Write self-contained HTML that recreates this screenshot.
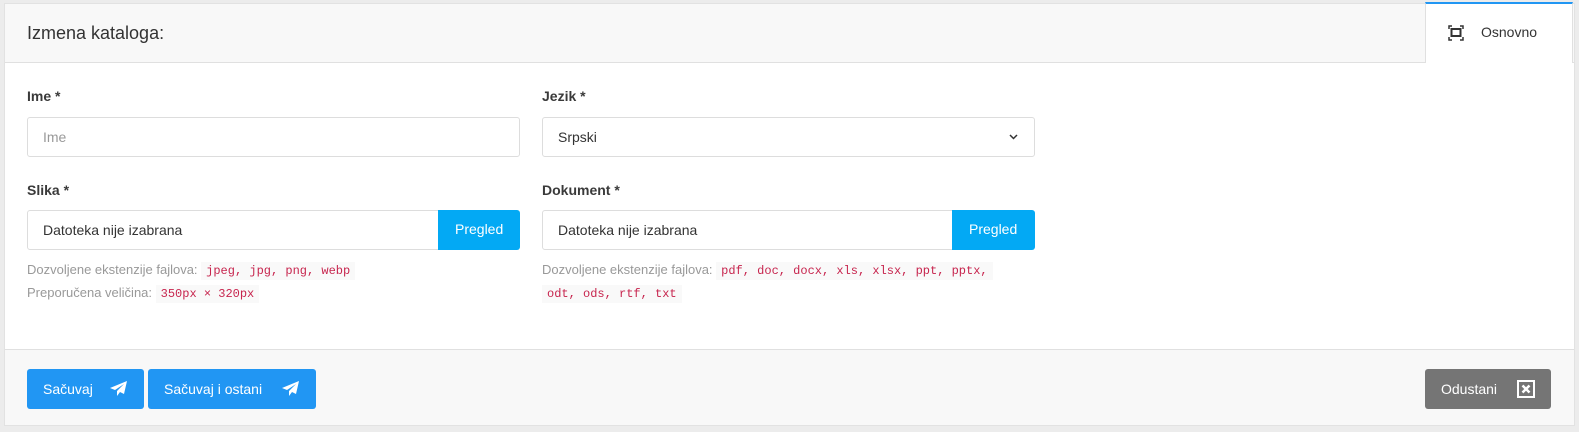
<!DOCTYPE html><html><head><style>
body{margin:0;background:#ececec;font-family:"Liberation Sans",sans-serif;width:1579px;height:432px;overflow:hidden;position:relative}
.card{position:absolute;left:4px;top:3px;width:1571px;height:423px;background:#fff;border:1px solid #e2e2e2;box-sizing:border-box}
.hdr{position:absolute;left:0;top:0;right:0;height:58px;background:#f8f8f8;border-bottom:1px solid #e0e0e0}
.hdr .t{position:absolute;left:22px;top:19px;font-size:18px;color:#333}
.tab{position:absolute;left:1420px;top:-2px;width:148px;height:61px;background:#fff;border-top:2px solid #2196f3;border-left:1px solid #e0e0e0;border-right:1px solid #e0e0e0;box-sizing:border-box}
.tab span{position:absolute;left:55px;top:20px;font-size:14px;color:#333}
.lbl{position:absolute;font-size:14px;font-weight:bold;color:#3a3a3a}
.inp{position:absolute;height:40px;border:1px solid #ddd;border-radius:3px;box-sizing:border-box;font-size:14px;color:#333;padding:11px 15px}
.btnb{position:absolute;background:#03a9f4;color:#fff;font-size:14px;height:40px;border-radius:0 3px 3px 0;padding:11px 17px;box-sizing:border-box}
.help{position:absolute;font-size:13px;color:#999;line-height:22px}
code{font-family:"Liberation Mono",monospace;font-size:12px;color:#c7254e;background:#f9f9f9;padding:2px 5px}
.ftr{position:absolute;left:0;right:0;top:345px;bottom:0;background:#f8f8f8;border-top:1px solid #e0e0e0}
.b{position:absolute;top:19px;height:40px;border-radius:3px;color:#fff;font-size:14px;box-sizing:border-box;padding:12px 16px}
</style></head><body>
<div class="card">
<div class="hdr"><div class="t">Izmena kataloga:</div>
<div class="tab"><svg style="position:absolute;left:22px;top:21px" width="16" height="16" viewBox="0 0 16 16" fill="none" stroke="#333" stroke-width="1.5"><rect x="3.5" y="4" width="9" height="7" stroke-width="2"/><path d="M1 4V1h3M12 1h3v3M15 12v3h-3M4 15H1v-3"/></svg><span>Osnovno</span></div></div>
<div class="lbl" style="left:22px;top:84px">Ime *</div>
<div class="inp" style="left:22px;top:113px;width:493px;color:#999">Ime</div>
<div class="lbl" style="left:537px;top:84px">Jezik *</div>
<div class="inp" style="left:537px;top:113px;width:493px">Srpski<svg style="position:absolute;right:16px;top:16px" width="9" height="6" viewBox="0 0 9 6"><path d="M1 1l3.5 3.5L8 1" stroke="#333" stroke-width="1.5" fill="none"/></svg></div>
<div class="lbl" style="left:22px;top:178px">Slika *</div>
<div class="inp" style="left:22px;top:206px;width:413px;border-radius:3px 0 0 3px">Datoteka nije izabrana</div>
<div class="btnb" style="left:433px;top:206px;width:82px">Pregled</div>
<div class="help" style="left:22px;top:255px">Dozvoljene ekstenzije fajlova: <code>jpeg, jpg, png, webp</code><br>Preporučena veličina: <code>350px × 320px</code></div>
<div class="lbl" style="left:537px;top:178px">Dokument *</div>
<div class="inp" style="left:537px;top:206px;width:412px;border-radius:3px 0 0 3px">Datoteka nije izabrana</div>
<div class="btnb" style="left:947px;top:206px;width:83px">Pregled</div>
<div class="help" style="left:537px;top:255px;width:500px">Dozvoljene ekstenzije fajlova: <code>pdf, doc, docx, xls, xlsx, ppt, pptx,</code><br><code>odt, ods, rtf, txt</code></div>
<div class="ftr">
<div class="b" style="left:22px;width:117px;background:#2196f3">Sačuvaj<svg style="position:absolute;right:16px;top:12px" width="18" height="16" viewBox="0 0 18 16"><path d="M17 0L0 7l5 2 9-6-7 7v5l3-4 4 2z" fill="#fff"/></svg></div>
<div class="b" style="left:143px;width:168px;background:#2196f3">Sačuvaj i ostani<svg style="position:absolute;right:16px;top:12px" width="18" height="16" viewBox="0 0 18 16"><path d="M17 0L0 7l5 2 9-6-7 7v5l3-4 4 2z" fill="#fff"/></svg></div>
<div class="b" style="left:1420px;width:126px;background:#757575">Odustani<svg style="position:absolute;right:16px;top:11px" width="18" height="18" viewBox="0 0 18 18"><rect x="1" y="1" width="16" height="16" fill="none" stroke="#fff" stroke-width="2"/><path d="M5.5 5.5l7 7M12.5 5.5l-7 7" stroke="#fff" stroke-width="2.5"/></svg></div>
</div>
</div>
</body></html>
